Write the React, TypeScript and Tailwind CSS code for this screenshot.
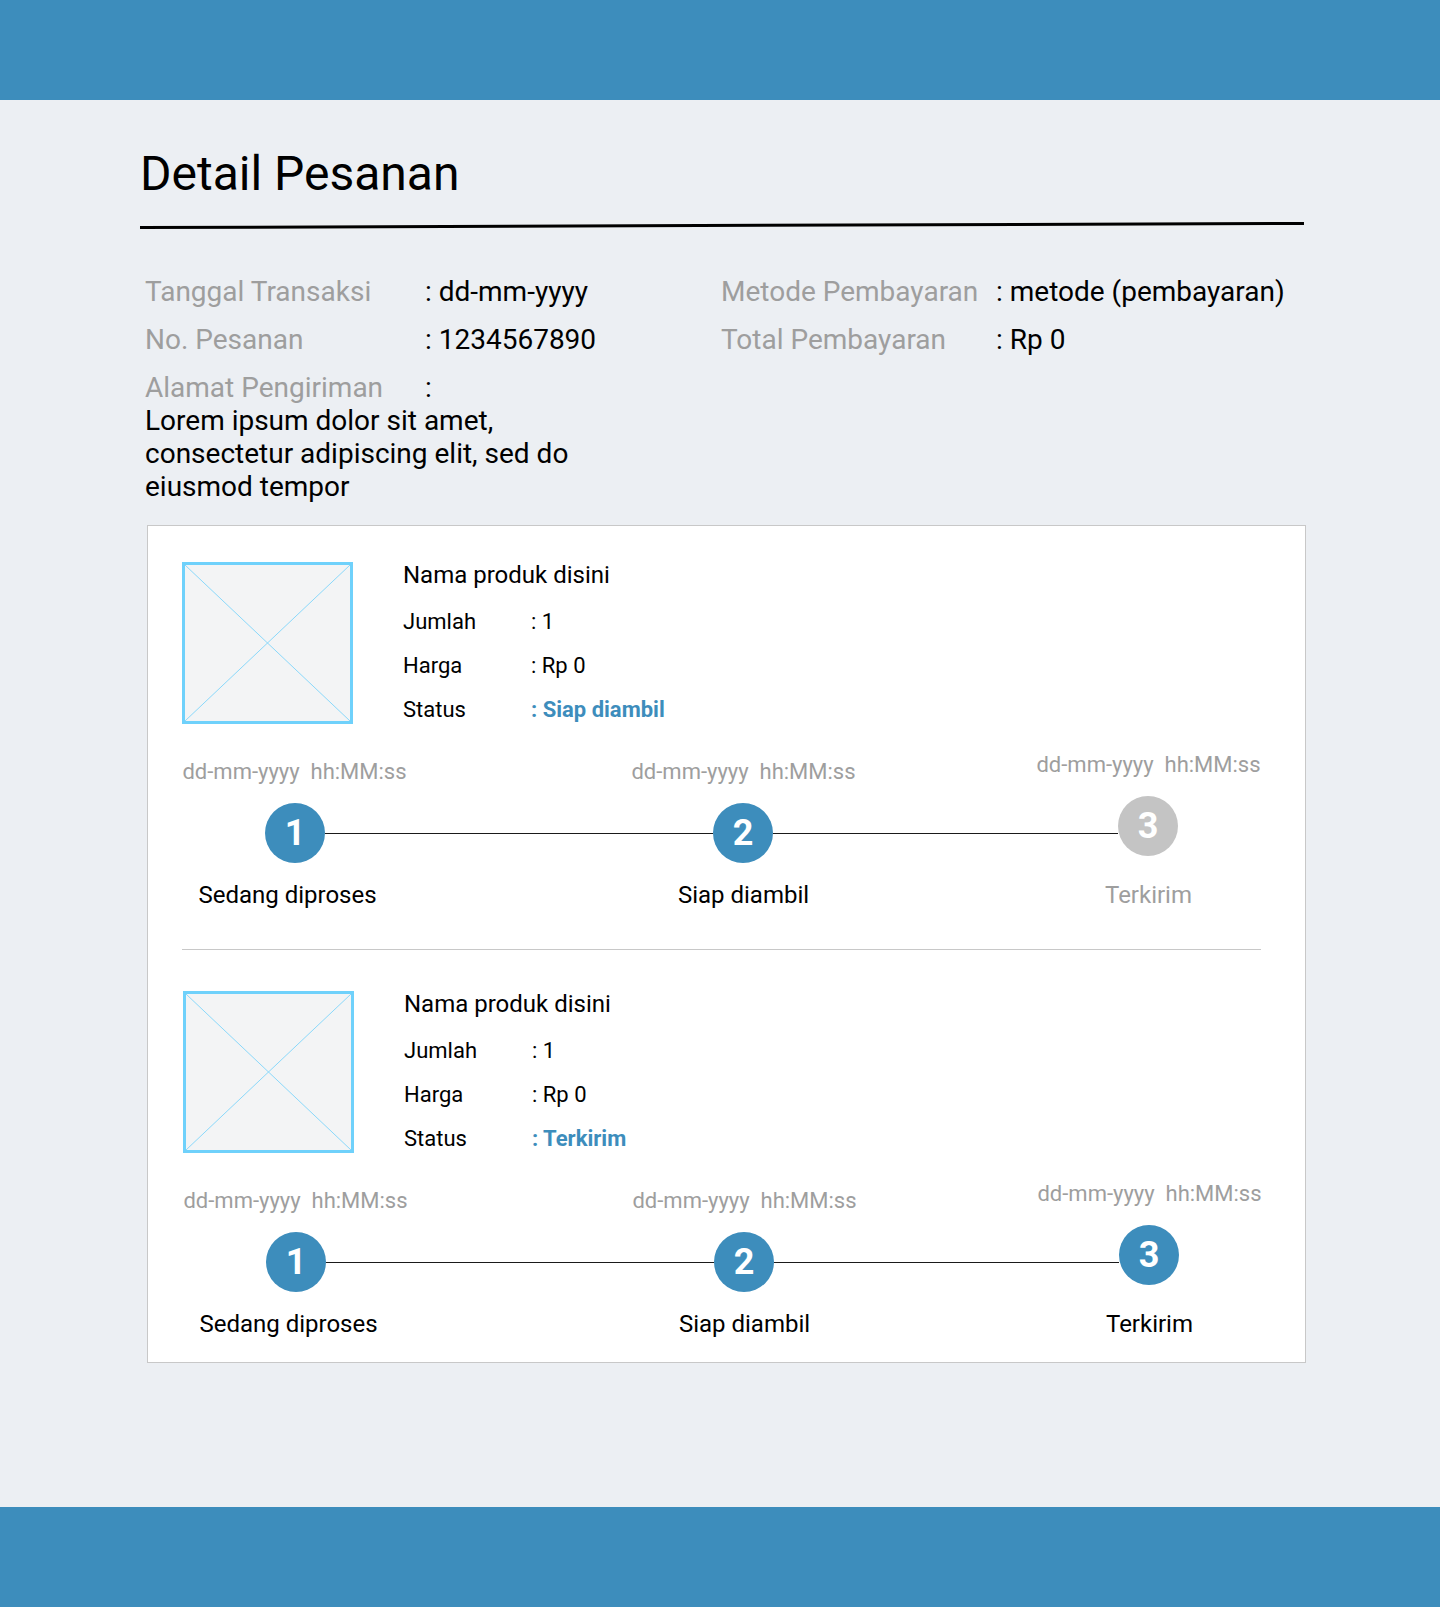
import React from 'react';

type Step = { label: string; done: boolean };

const InfoRow = ({ label, value, labelWidth }: { label: string; value: string; labelWidth: string }) => (
  <div className="flex leading-[33px] text-[28px]">
    <span className={`${labelWidth} text-[#9e9e9e]`}>{label}</span>
    <span className="text-black">{value}</span>
  </div>
);

const ImagePlaceholder = () => (
  <div className="w-[171px] h-[162px] border-[3px] border-[#6fd1fb] bg-[#f3f4f5] shrink-0">
    <svg width="100%" height="100%" viewBox="0 0 100 100" preserveAspectRatio="none">
      <line x1="0" y1="0" x2="100" y2="100" stroke="#8ad8fa" strokeWidth="1" vectorEffect="non-scaling-stroke" />
      <line x1="100" y1="0" x2="0" y2="100" stroke="#8ad8fa" strokeWidth="1" vectorEffect="non-scaling-stroke" />
    </svg>
  </div>
);

const Circle = ({ n, done, className = '' }: { n: number; done: boolean; className?: string }) => (
  <div
    className={`w-[60px] h-[60px] rounded-full flex items-center justify-center text-white font-bold text-[36px] leading-none shrink-0 ${
      done ? 'bg-[#3d8dbc]' : 'bg-[#c4c4c4]'
    } ${className}`}
  >
    {n}
  </div>
);

const Timeline = ({ steps }: { steps: Step[] }) => {
  const date = 'dd-mm-yyyy\u00a0\u00a0hh:MM:ss';
  return (
    <div>
      {/* dates */}
      <div className="flex text-[22px] leading-[28px] text-[#9e9e9e]">
        <div className="w-[225px] text-center">{date}</div>
        <div className="w-[225px] text-center ml-[224px]">{date}</div>
        <div className="w-[225px] text-center ml-[180px] -translate-y-[7px]">{date}</div>
      </div>

      {/* circles + connectors */}
      <div className="flex items-center mt-[17px]">
        <Circle n={1} done={steps[0].done} className="ml-[83px]" />
        <div className="w-[388px] h-px bg-[#1a1a1a]" />
        <Circle n={2} done={steps[1].done} />
        <div className="w-[345px] h-px bg-[#1a1a1a]" />
        <Circle n={3} done={steps[2].done} className="-translate-y-[7px]" />
      </div>

      {/* labels */}
      <div className="flex text-[24px] leading-[28px] mt-[18px] -ml-[7px]">
        {steps.map((s, i) => (
          <div
            key={s.label}
            className={`w-[225px] text-center ${i === 1 ? 'ml-[231px]' : ''} ${i === 2 ? 'ml-[180px]' : ''} ${
              s.done ? 'text-black' : 'text-[#9e9e9e]'
            }`}
          >
            {s.label}
          </div>
        ))}
      </div>
    </div>
  );
};

const ProductItem = ({ status, steps, shift = '' }: { status: string; steps: Step[]; shift?: string }) => (
  <div className={shift}>
    <div className="flex">
      <ImagePlaceholder />
      <div className="ml-[50px] pt-[1px]">
        <div className="text-[24px] leading-[24px] text-black">Nama produk disini</div>
        <div className="mt-[13px] text-[22px] leading-[44px]">
          <div className="flex">
            <span className="w-[128px]">Jumlah</span>
            <span>: 1</span>
          </div>
          <div className="flex">
            <span className="w-[128px]">Harga</span>
            <span>: Rp 0</span>
          </div>
          <div className="flex">
            <span className="w-[128px]">Status</span>
            <span className="font-bold text-[#3d8dbc]">: {status}</span>
          </div>
        </div>
      </div>
    </div>
    <div className="mt-[26px]">
      <Timeline steps={steps} />
    </div>
  </div>
);

export default function App() {
  return (
    <div
      className="min-h-[1607px] flex flex-col bg-[#eceff3] text-black"
      style={{ fontFamily: 'Roboto, "Liberation Sans", sans-serif' }}
    >
      <header className="h-[100px] bg-[#3d8dbc] shrink-0" />

      <main className="h-[1407px] pl-[140px] pt-[46px]">
        <h1 className="text-[48px] leading-[56px] font-normal">Detail Pesanan</h1>
        <div className="mt-[22px] w-[1164px] h-[3px] bg-black -rotate-[0.2deg]" />

        {/* order info */}
        <div className="mt-[48px] ml-[5px] flex">
          <div className="w-[576px]">
            <InfoRow label="Tanggal Transaksi" value=": dd-mm-yyyy" labelWidth="w-[280px]" />
            <div className="mt-[15px]">
              <InfoRow label="No. Pesanan" value=": 1234567890" labelWidth="w-[280px]" />
            </div>
            <div className="mt-[15px]">
              <InfoRow label="Alamat Pengiriman" value=":" labelWidth="w-[280px]" />
            </div>
            <div className="text-[28px] leading-[33px]">
              <div>Lorem ipsum dolor sit amet,</div>
              <div>consectetur adipiscing elit, sed do</div>
              <div>eiusmod tempor</div>
            </div>
          </div>
          <div>
            <InfoRow label="Metode Pembayaran" value=": metode (pembayaran)" labelWidth="w-[275px]" />
            <div className="mt-[15px]">
              <InfoRow label="Total Pembayaran" value=": Rp 0" labelWidth="w-[275px]" />
            </div>
          </div>
        </div>

        {/* products */}
        <div className="mt-[22px] ml-[7px] w-[1159px] bg-white border border-[#c8c8c8] pl-[34px] pt-[36px] pb-[24px]">
          <ProductItem
            status="Siap diambil"
            steps={[
              { label: 'Sedang diproses', done: true },
              { label: 'Siap diambil', done: true },
              { label: 'Terkirim', done: false },
            ]}
          />
          <div className="mt-[40px] mb-[41px] w-[1079px] h-px bg-[#c8c8c8]" />
          <ProductItem
            shift="ml-[1px]"
            status="Terkirim"
            steps={[
              { label: 'Sedang diproses', done: true },
              { label: 'Siap diambil', done: true },
              { label: 'Terkirim', done: true },
            ]}
          />
        </div>
      </main>

      <footer className="h-[100px] bg-[#3d8dbc] shrink-0" />
    </div>
  );
}
